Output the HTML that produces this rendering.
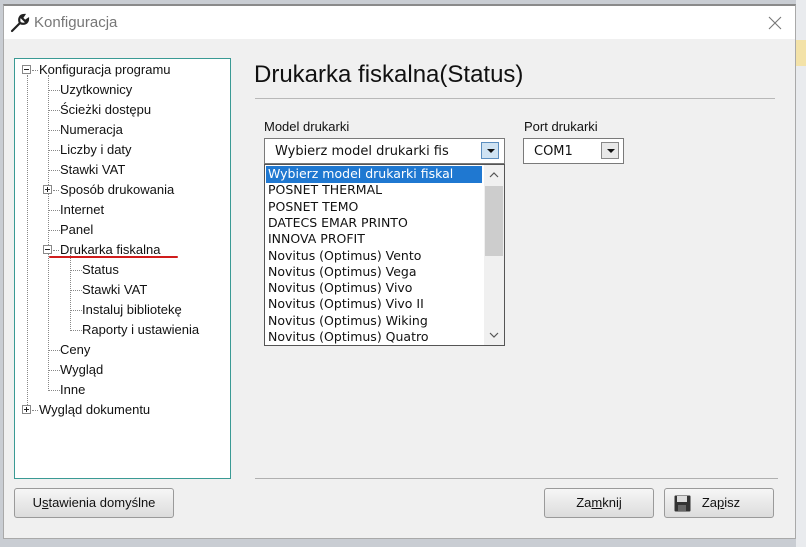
<!DOCTYPE html>
<html><head><meta charset="utf-8"><style>
*{margin:0;padding:0;box-sizing:border-box}
body{width:806px;height:547px;background:#c9cdd3;position:relative;overflow:hidden;font-family:"Liberation Sans",sans-serif;font-size:13px;color:#111}
.abs{position:absolute}
#dlg{left:3px;top:4px;width:793px;height:535px;background:#f0f0f0;border:1px solid #a9a9a9;border-top:2px solid #8a8a8a}
#title{left:0;top:0;width:791px;height:33px;background:#fff}
.t{position:absolute;white-space:nowrap;line-height:16px}
.tree{left:14px;top:58px;width:217px;height:421px;background:#fff;border:1px solid #3a9a94}
.vl{position:absolute;border-left:1px dotted #888;width:0}
.hl{position:absolute;border-top:1px dotted #888;height:0}
.box{position:absolute;width:9px;height:9px;border:1px solid #888;background:#fff}
.box:before{content:"";position:absolute;left:1px;top:3px;width:5px;height:1px;background:#222}
.box.p:after{content:"";position:absolute;left:3px;top:1px;width:1px;height:5px;background:#222}
.btn{position:absolute;height:30px;border:1px solid #9a9a9a;border-radius:3px;background:linear-gradient(#f6f6f6,#dcdcdc);text-align:center;line-height:28px;font-size:13px;color:#111}
.combo{position:absolute;background:#fff;border:1px solid #7a7a7a}
.arr{position:absolute;width:18px;height:17px;border:1px solid #888;background:#e8e8e8}
.arr:after{content:"";position:absolute;left:5px;top:6px;border-left:4px solid transparent;border-right:4px solid transparent;border-top:4px solid #111}
.li{position:absolute;left:3px;font-family:"DejaVu Sans",sans-serif;font-size:12.5px;line-height:16.3px;white-space:nowrap}
</style></head><body>
<div id="dlg" class="abs">
 <div id="title" class="abs">
  <svg class="abs" style="left:5px;top:6px" width="22" height="22" viewBox="0 0 22 22"><path d="M3 19 L11 11 M11 11 C9 7 11 3 15 3 L13 6 L16 9 L19 7 C19 11 15 13 11 11" fill="none" stroke="#222" stroke-width="2.2" stroke-linecap="round"/></svg>
  <div class="t" style="left:30px;top:9px;font-size:15px;color:#777">Konfiguracja</div>
  <svg class="abs" style="left:764px;top:10px" width="14" height="14" viewBox="0 0 14 14"><path d="M1 1 L13 13 M13 1 L1 13" stroke="#777" stroke-width="1.1"/></svg>
 </div>
</div>
<div class="abs" style="left:796px;top:0;width:10px;height:547px;background:#e9ebee"></div>
<div class="abs" style="left:796px;top:40px;width:10px;height:26px;background:#f3e2a8"></div>

<div class="abs tree">
 <div class="vl" style="left:12px;top:16px;height:336px"></div>
 <div class="vl" style="left:33px;top:16px;height:316px"></div>
 <div class="vl" style="left:55px;top:196px;height:76px"></div>
 <div class="hl" style="left:17px;top:11px;width:6px"></div>
 <div class="hl" style="left:17px;top:351px;width:6px"></div>
 <div class="hl" style="left:38px;top:131px;width:6px"></div>
 <div class="hl" style="left:38px;top:191px;width:6px"></div>
 <div class="hl" style="left:34px;top:31px;width:11px"></div>
 <div class="hl" style="left:34px;top:51px;width:11px"></div>
 <div class="hl" style="left:34px;top:71px;width:11px"></div>
 <div class="hl" style="left:34px;top:91px;width:11px"></div>
 <div class="hl" style="left:34px;top:111px;width:11px"></div>
 <div class="hl" style="left:34px;top:151px;width:11px"></div>
 <div class="hl" style="left:34px;top:171px;width:11px"></div>
 <div class="hl" style="left:56px;top:211px;width:11px"></div>
 <div class="hl" style="left:56px;top:231px;width:11px"></div>
 <div class="hl" style="left:56px;top:251px;width:11px"></div>
 <div class="hl" style="left:56px;top:271px;width:11px"></div>
 <div class="hl" style="left:34px;top:291px;width:11px"></div>
 <div class="hl" style="left:34px;top:311px;width:11px"></div>
 <div class="hl" style="left:34px;top:331px;width:11px"></div>
 <div class="box" style="left:7px;top:6px"></div>
 <div class="box p" style="left:28px;top:126px"></div>
 <div class="box" style="left:28px;top:186px"></div>
 <div class="box p" style="left:7px;top:346px"></div>
 <div class="t" style="left:24px;top:3px">Konfiguracja programu</div>
 <div class="t" style="left:45px;top:23px">Uzytkownicy</div>
 <div class="t" style="left:45px;top:43px">Ścieżki dostępu</div>
 <div class="t" style="left:45px;top:63px">Numeracja</div>
 <div class="t" style="left:45px;top:83px">Liczby i daty</div>
 <div class="t" style="left:45px;top:103px">Stawki VAT</div>
 <div class="t" style="left:45px;top:123px">Sposób drukowania</div>
 <div class="t" style="left:45px;top:143px">Internet</div>
 <div class="t" style="left:45px;top:163px">Panel</div>
 <div class="t" style="left:45px;top:183px">Drukarka fiskalna</div>
 <div class="abs" style="left:34px;top:197px;width:129px;height:2px;background:#d01c1c;border-radius:1px"></div>
 <div class="t" style="left:67px;top:203px">Status</div>
 <div class="t" style="left:67px;top:223px">Stawki VAT</div>
 <div class="t" style="left:67px;top:243px">Instaluj bibliotekę</div>
 <div class="t" style="left:67px;top:263px">Raporty i ustawienia</div>
 <div class="t" style="left:45px;top:283px">Ceny</div>
 <div class="t" style="left:45px;top:303px">Wygląd</div>
 <div class="t" style="left:45px;top:323px">Inne</div>
 <div class="t" style="left:24px;top:343px">Wygląd dokumentu</div>
</div>

<div class="t" style="left:254px;top:61px;font-size:24px;line-height:28px;color:#111">Drukarka fiskalna(Status)</div>
<div class="abs" style="left:255px;top:98px;width:520px;height:1px;background:#b8b8b8"></div>

<div class="t" style="left:264px;top:119px;font-size:13px">Model drukarki</div>
<div class="t" style="left:524px;top:119px;font-size:13px">Port drukarki</div>
<div class="combo" style="left:264px;top:138px;width:241px;height:26px">
 <div class="t" style="left:10px;top:5px;font-family:'DejaVu Sans',sans-serif;font-size:13px">Wybierz model drukarki fis</div>
 <div class="arr" style="left:216px;top:3px;background:#cfe3f3;border-color:#5c8fc0"></div>
</div>
<div class="combo" style="left:523px;top:138px;width:101px;height:26px">
 <div class="t" style="left:10px;top:5px;font-family:'DejaVu Sans',sans-serif;font-size:13px">COM1</div>
 <div class="arr" style="left:77px;top:3px"></div>
</div>
<div class="combo" style="left:264px;top:164px;width:241px;height:182px;border-color:#555">
 <div class="abs" style="left:1px;top:1px;width:216px;height:17px;background:#1f78d1"></div>
 <div class="li" style="top:1px;color:#fff">Wybierz model drukarki fiskal</div>
 <div class="li" style="top:17.3px">POSNET THERMAL</div>
 <div class="li" style="top:33.6px">POSNET TEMO</div>
 <div class="li" style="top:49.9px">DATECS EMAR PRINTO</div>
 <div class="li" style="top:66.2px">INNOVA PROFIT</div>
 <div class="li" style="top:82.5px">Novitus (Optimus) Vento</div>
 <div class="li" style="top:98.8px">Novitus (Optimus) Vega</div>
 <div class="li" style="top:115.1px">Novitus (Optimus) Vivo</div>
 <div class="li" style="top:131.4px">Novitus (Optimus) Vivo II</div>
 <div class="li" style="top:147.7px">Novitus (Optimus) Wiking</div>
 <div class="li" style="top:164px">Novitus (Optimus) Quatro</div>
 <div class="abs" style="left:219px;top:0;width:20px;height:180px;background:#f0f0f0"></div>
 <div class="abs" style="left:220px;top:21px;width:18px;height:70px;background:#cdcdcd"></div>
 <svg class="abs" style="left:224px;top:7px" width="10" height="6" viewBox="0 0 10 6"><path d="M1 5 L5 1 L9 5" fill="none" stroke="#555" stroke-width="1.2"/></svg>
 <svg class="abs" style="left:224px;top:167px" width="10" height="6" viewBox="0 0 10 6"><path d="M1 1 L5 5 L9 1" fill="none" stroke="#555" stroke-width="1.2"/></svg>
</div>

<div class="abs" style="left:255px;top:478px;width:523px;height:1px;background:#b0b0b0"></div>
<div class="btn" style="left:14px;top:488px;width:160px">U<u>s</u>tawienia domyślne</div>
<div class="btn" style="left:544px;top:488px;width:110px">Za<u>m</u>knij</div>
<div class="btn" style="left:664px;top:488px;width:110px;padding-left:4px">Za<u>p</u>isz
 <svg class="abs" style="left:9px;top:6px" width="17" height="17" viewBox="0 0 17 17"><rect x="0.5" y="0.5" width="16" height="16" rx="1" fill="#333"/><rect x="3" y="1" width="10" height="6" fill="#ddd"/><rect x="4" y="10" width="8" height="6" fill="#666"/></svg>
</div>
</body></html>
